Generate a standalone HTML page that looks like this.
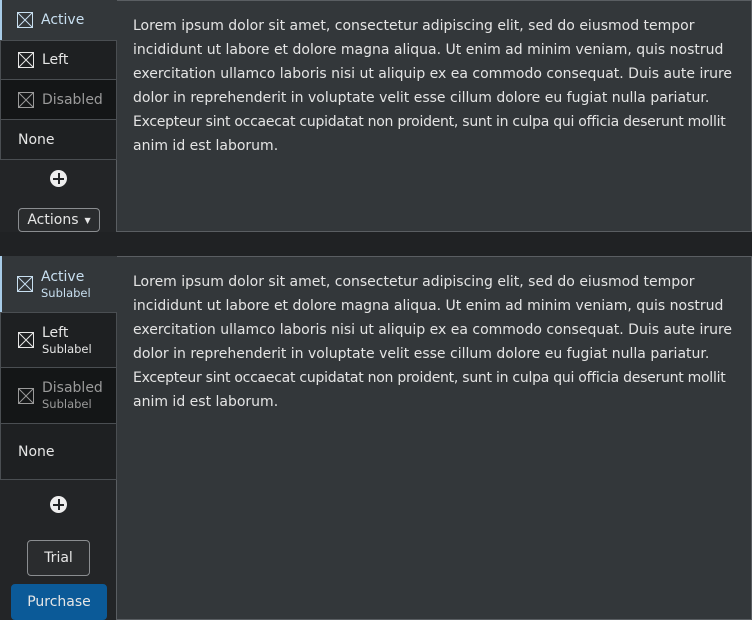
<!DOCTYPE html>
<html><head><style>
*{box-sizing:border-box;margin:0;padding:0}
body{width:752px;height:620px;background:#202224;font-family:"DejaVu Sans","Liberation Sans",sans-serif;color:#e0e0e0;position:relative;overflow:hidden}
.side{position:absolute;left:0;width:117px;background:#232527}
.tab{position:absolute;left:0;width:117px;border:1px solid #4a4e52;border-top:none;background:#1e2022;display:flex;align-items:center;padding-left:17px;font-size:14px;color:#e6e6e6}
.tab.act{background:#33373a;border:none;border-left:2px solid #a8cce8;padding-left:15px;color:#c8dff0;width:117px}
.tab.dis{background:#141617;color:#9a9a9a}
.tab svg{margin-right:8px;flex:none}
.lbl{line-height:17px;padding-top:1px}
.sub{font-size:11.5px;line-height:15px}
.content{position:absolute;left:116px;right:0;background:#33373a;border:1px solid #5a5e62;padding:13px 0 12px 16px;font-size:14px;line-height:24px;color:#e4e4e4;white-space:nowrap;overflow:hidden}
.t{letter-spacing:-0.26px}
.plus{position:absolute;left:50px;width:17px;height:17px;border-radius:50%;background:#eee}
.plus:before,.plus:after{content:"";position:absolute;background:#232527}
.plus:before{left:3px;top:7.5px;width:11px;height:2px}
.plus:after{left:7.5px;top:3px;width:2px;height:11px}
.btn{position:absolute;border:1px solid #8a8d90;border-radius:4px;background:#2a2c2e;font-size:14px;color:#e6e6e6;display:flex;align-items:center;justify-content:center}
</style></head><body>
<svg width="0" height="0" style="position:absolute"><defs><g id="x"><rect x="0.5" y="0.5" width="15" height="15" fill="none" stroke="currentColor"/><path d="M1 1L15 15M15 1L1 15" stroke="currentColor"/></g></defs></svg>

<div class="side" style="top:0;height:232px"></div>
<div class="content" style="top:0;height:232px">Lorem ipsum dolor sit amet, consectetur adipiscing elit, sed do eiusmod tempor<br>incididunt ut labore et dolore magna aliqua. Ut enim ad minim veniam, quis nostrud<br>exercitation ullamco laboris nisi ut aliquip ex ea commodo consequat. Duis aute irure<br>dolor in reprehenderit in voluptate velit esse cillum dolore eu fugiat nulla pariatur.<br><span class="t">Excepteur sint occaecat cupidatat non proident, sunt in culpa qui officia deserunt mollit</span><br>anim id est laborum.</div>
<div class="tab act" style="top:0;height:40px"><svg width="16" height="16"><use href="#x"/></svg>Active</div>
<div class="tab" style="top:40px;height:40px;border-top:1px solid #4a4e52"><svg width="16" height="16"><use href="#x"/></svg>Left</div>
<div class="tab dis" style="top:80px;height:40px"><svg width="16" height="16"><use href="#x"/></svg>Disabled</div>
<div class="tab" style="top:120px;height:40px">None</div>
<div class="plus" style="top:170px"></div>
<div class="btn" style="left:18px;top:208px;width:82px;height:24px">Actions <span style="font-size:8px;margin-left:6px">&#9660;</span></div>

<div class="side" style="top:256px;height:364px"></div>
<div class="content" style="top:256px;height:364px">Lorem ipsum dolor sit amet, consectetur adipiscing elit, sed do eiusmod tempor<br>incididunt ut labore et dolore magna aliqua. Ut enim ad minim veniam, quis nostrud<br>exercitation ullamco laboris nisi ut aliquip ex ea commodo consequat. Duis aute irure<br>dolor in reprehenderit in voluptate velit esse cillum dolore eu fugiat nulla pariatur.<br><span class="t">Excepteur sint occaecat cupidatat non proident, sunt in culpa qui officia deserunt mollit</span><br>anim id est laborum.</div>
<div class="tab act" style="top:256px;height:56px"><svg width="16" height="16"><use href="#x"/></svg><div><div class="lbl">Active</div><div class="sub">Sublabel</div></div></div>
<div class="tab" style="top:312px;height:56px;border-top:1px solid #4a4e52"><svg width="16" height="16"><use href="#x"/></svg><div><div class="lbl">Left</div><div class="sub">Sublabel</div></div></div>
<div class="tab dis" style="top:368px;height:56px"><svg width="16" height="16"><use href="#x"/></svg><div><div class="lbl">Disabled</div><div class="sub">Sublabel</div></div></div>
<div class="tab" style="top:424px;height:56px">None</div>
<div class="plus" style="top:496px"></div>
<div class="btn" style="left:27px;top:540px;width:63px;height:36px">Trial</div>
<div class="btn" style="left:11px;top:584px;width:96px;height:36px;background:#0b5a98;border-color:#0b5a98">Purchase</div>
</body></html>
